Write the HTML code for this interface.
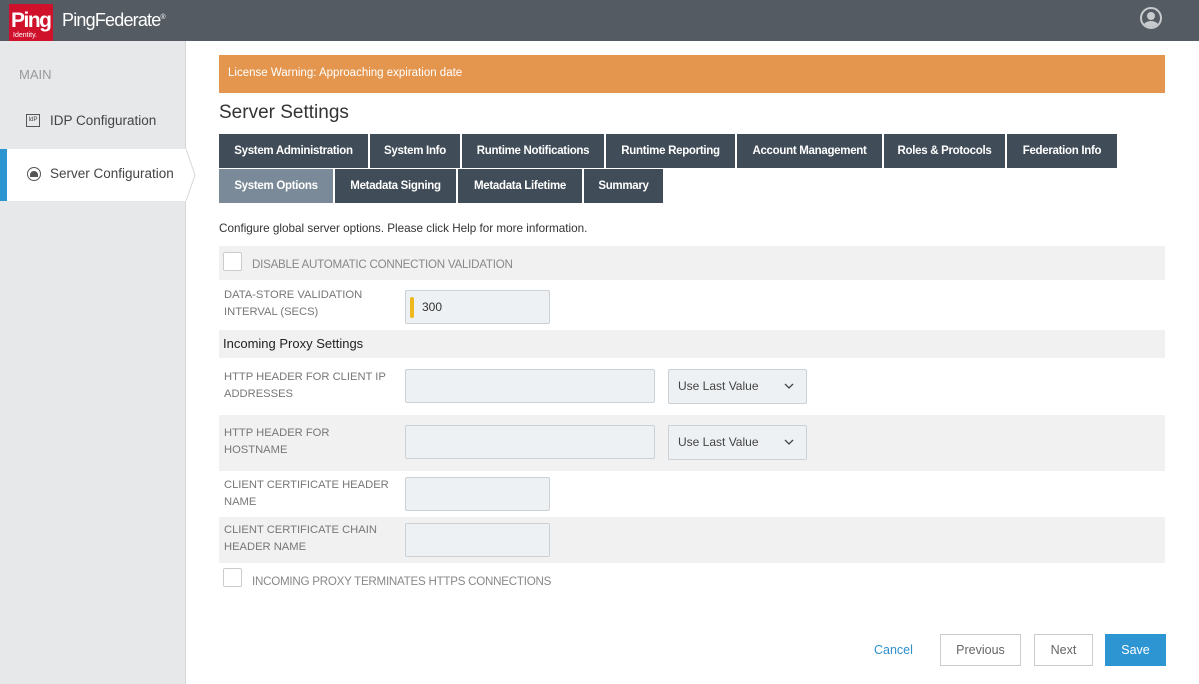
<!DOCTYPE html>
<html><head><style>
*{box-sizing:border-box;margin:0;padding:0}
body{width:1199px;height:684px;overflow:hidden;font-family:"Liberation Sans",sans-serif;background:#fff;position:relative;color:#333}
.top{position:absolute;left:0;top:0;width:1199px;height:41px;background:#555b62}
.logo{position:absolute;left:9px;top:4px;width:44px;height:39px;background:#d0112b;color:#fff;font-weight:bold;font-size:21px;padding:5px 0 0 2px;letter-spacing:-1.5px}
.logo small{position:absolute;left:4px;top:28px;font-size:7px;font-weight:normal;letter-spacing:0}
.pf{position:absolute;left:62px;top:10px;color:#fff;font-size:18px;letter-spacing:-.8px}
.user{position:absolute;left:1140px;top:7px;width:22px;height:22px;border-radius:50%;border:2px solid #c8cbce;overflow:hidden}
.side{position:absolute;left:0;top:41px;width:186px;height:643px;background:#e6e8e9;border-right:1px solid #d5d8da}
.s{position:absolute;font-size:14px;color:#444}
.act{position:absolute;left:0;top:149px;width:186px;height:52px;background:#fff;border-left:7px solid #2e95d3}
.tab{position:absolute;height:34px;background:#404c57;color:#fff;font-weight:bold;font-size:11.5px;letter-spacing:-.3px;text-align:center;line-height:34px}
.lbl{position:absolute;font-size:11.2px;color:#777;line-height:17px}
.band{position:absolute;left:219px;width:946px;background:#f1f1f1}
.inp{position:absolute;height:34px;border:1px solid #ccd1d5;background:#eef1f3;border-radius:2px}
.sel{position:absolute;height:35px;border:1px solid #ccd1d5;background:#eef1f3;border-radius:2px;font-size:12px;color:#444;padding:9px 9px}
.sel svg{position:absolute;right:12px;top:13px}
.cb{position:absolute;width:19px;height:19px;border:1px solid #ccc;background:#fff;border-radius:2px}
.btn{position:absolute;top:634px;height:32px;border:1px solid #ccc;background:#fff;font-size:12.5px;color:#666;text-align:center;line-height:31px}
</style></head><body>
<div class="top"><div class="logo">Ping<small>Identity.</small></div><div class="pf">PingFederate<sup style="font-size:7px">®</sup></div>
<div class="user"><div style="position:absolute;left:5px;top:3px;width:8px;height:8px;border-radius:50%;background:#c8cbce"></div><div style="position:absolute;left:1px;top:12px;width:16px;height:12px;border-radius:50%;background:#c8cbce"></div></div></div>
<div class="side">
<div class="s" style="left:19px;top:26px;color:#999;font-size:13px">MAIN</div>
<div class="s" style="left:26px;top:73px;width:14px;height:13px;border:1.5px solid #555;font-size:6px;line-height:10px;text-align:center">IdP</div>
<div class="s" style="left:50px;top:72px;font-size:13.5px">IDP Configuration</div>
</div>
<div class="act"></div>
<svg style="position:absolute;left:186px;top:149px" width="10" height="52"><path d="M0 0 L9 26 L0 52" fill="#fff" stroke="#d5d8da"/></svg>
<div style="position:absolute;left:27px;top:167px;width:14px;height:14px;border-radius:50%;border:1px solid #555"><div style="position:absolute;left:2px;top:3px;width:8px;height:6px;background:#555;border-radius:4px 4px 0 0"></div></div>
<div class="s" style="left:50px;top:166px;font-size:13.5px">Server Configuration</div>

<div style="position:absolute;left:219px;top:55px;width:946px;height:38px;background:#e4964f;color:#fff;font-size:11.5px;padding:12px 9px">License Warning: Approaching expiration date</div>
<div style="position:absolute;left:219px;top:102px;font-size:19px;color:#333">Server Settings</div>

<div class="tab" style="left:219px;top:134px;width:149px">System Administration</div>
<div class="tab" style="left:370px;top:134px;width:90px">System Info</div>
<div class="tab" style="left:462px;top:134px;width:142px">Runtime Notifications</div>
<div class="tab" style="left:606px;top:134px;width:129px">Runtime Reporting</div>
<div class="tab" style="left:737px;top:134px;width:145px">Account Management</div>
<div class="tab" style="left:884px;top:134px;width:121px">Roles &amp; Protocols</div>
<div class="tab" style="left:1007px;top:134px;width:110px">Federation Info</div>
<div class="tab" style="left:219px;top:169px;width:114px;background:#7b8a98">System Options</div>
<div class="tab" style="left:335px;top:169px;width:121px">Metadata Signing</div>
<div class="tab" style="left:458px;top:169px;width:124px">Metadata Lifetime</div>
<div class="tab" style="left:584px;top:169px;width:79px">Summary</div>

<div style="position:absolute;left:219px;top:222px;font-size:11.7px;color:#333">Configure global server options. Please click Help for more information.</div>
<div class="band" style="top:246px;height:34px"></div>
<div class="cb" style="left:223px;top:252px"></div>
<div class="lbl" style="left:252px;top:256px;font-size:11.6px;color:#888;letter-spacing:-.25px">DISABLE AUTOMATIC CONNECTION VALIDATION</div>
<div class="lbl" style="left:224px;top:287px">DATA-STORE VALIDATION<br>INTERVAL (SECS)</div>
<div class="inp" style="left:405px;top:290px;width:145px"><div style="position:absolute;left:4px;top:6px;width:4px;height:21px;background:#efb81c;border-radius:2px"></div><div style="position:absolute;left:16px;top:9px;font-size:12px">300</div></div>
<div class="band" style="top:330px;height:28px"></div>
<div style="position:absolute;left:223px;top:336px;font-size:13px;color:#222">Incoming Proxy Settings</div>
<div class="lbl" style="left:224px;top:369px">HTTP HEADER FOR CLIENT IP<br>ADDRESSES</div>
<div class="inp" style="left:405px;top:369px;width:250px"></div>
<div class="sel" style="left:668px;top:369px;width:139px">Use Last Value<svg width="10" height="7"><path d="M1 1 L5 5 L9 1" fill="none" stroke="#444" stroke-width="1.3"/></svg></div>
<div class="band" style="top:415px;height:56px"></div>
<div class="lbl" style="left:224px;top:425px">HTTP HEADER FOR<br>HOSTNAME</div>
<div class="inp" style="left:405px;top:425px;width:250px"></div>
<div class="sel" style="left:668px;top:425px;width:139px">Use Last Value<svg width="10" height="7"><path d="M1 1 L5 5 L9 1" fill="none" stroke="#444" stroke-width="1.3"/></svg></div>
<div class="lbl" style="left:224px;top:477px">CLIENT CERTIFICATE HEADER<br>NAME</div>
<div class="inp" style="left:405px;top:477px;width:145px"></div>
<div class="band" style="top:517px;height:46px"></div>
<div class="lbl" style="left:224px;top:522px">CLIENT CERTIFICATE CHAIN<br>HEADER NAME</div>
<div class="inp" style="left:405px;top:523px;width:145px"></div>
<div class="cb" style="left:223px;top:568px"></div>
<div class="lbl" style="left:252px;top:573px;font-size:11.6px;color:#888;letter-spacing:-.25px">INCOMING PROXY TERMINATES HTTPS CONNECTIONS</div>

<div style="position:absolute;left:874px;top:643px;font-size:12.5px;color:#2e8fcc">Cancel</div>
<div class="btn" style="left:940px;width:81px">Previous</div>
<div class="btn" style="left:1034px;width:59px">Next</div>
<div class="btn" style="left:1105px;width:61px;background:#2e95d3;border-color:#2e95d3;color:#fff">Save</div>
</body></html>
